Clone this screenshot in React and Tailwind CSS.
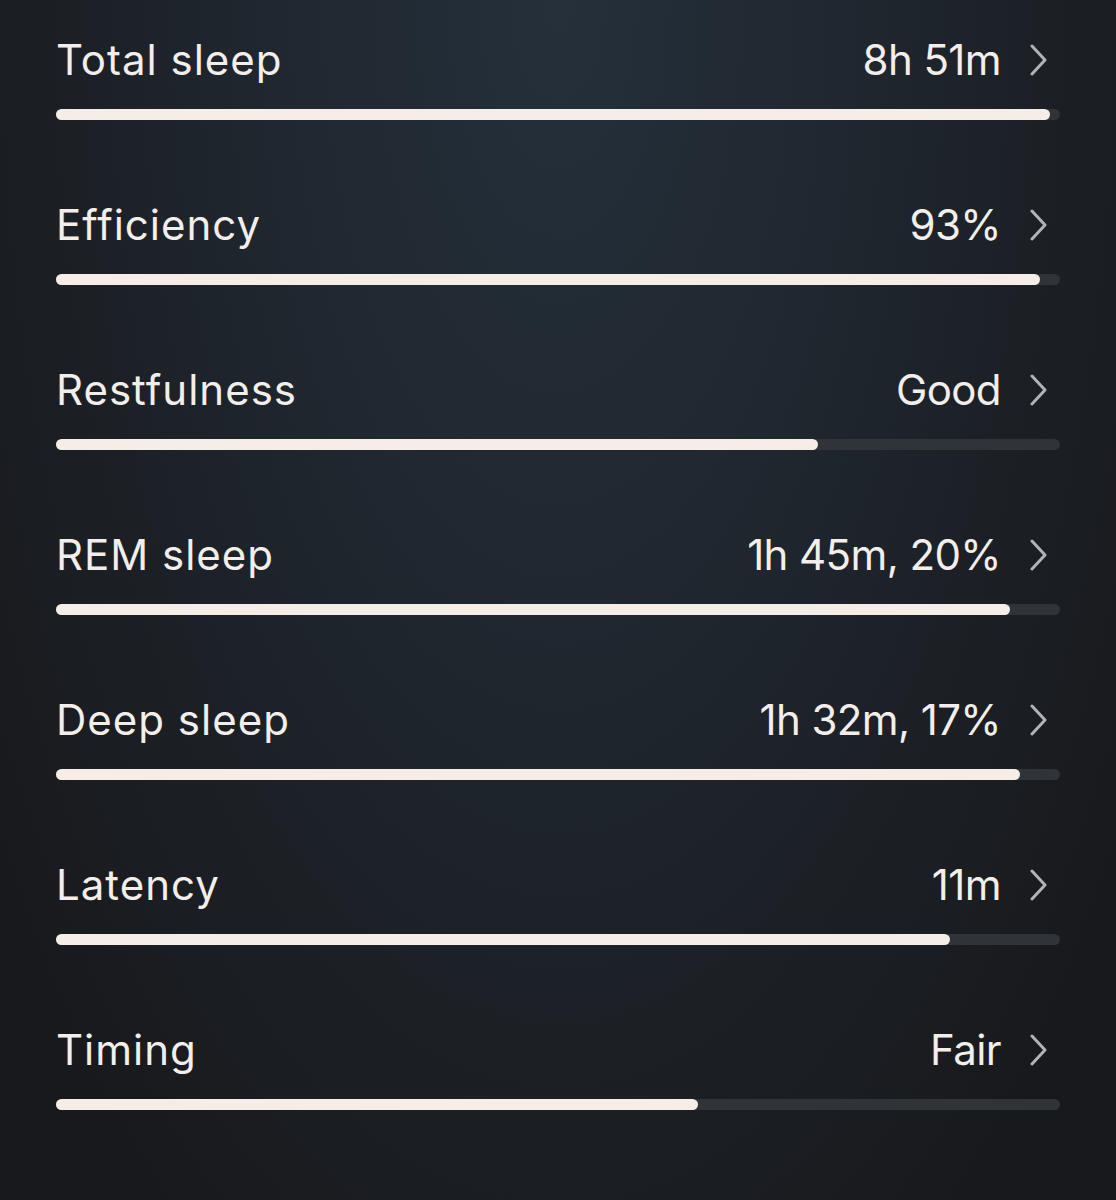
const rows = [
  { label: 'Total sleep', value: '8h 51m', fill: 994 },
  { label: 'Efficiency', value: '93%', fill: 984 },
  { label: 'Restfulness', value: 'Good', fill: 762 },
  { label: 'REM sleep', value: '1h 45m, 20%', fill: 954 },
  { label: 'Deep sleep', value: '1h 32m, 17%', fill: 964 },
  { label: 'Latency', value: '11m', fill: 894 },
  { label: 'Timing', value: 'Fair', fill: 642 },
];

function Chevron() {
  return (
    <svg width="20" height="32" viewBox="0 0 20 32" fill="none" className="shrink-0">
      <polyline points="4,2 17,16 4,30" stroke="#b3b3b5" strokeWidth="3" strokeLinecap="round" strokeLinejoin="round" />
    </svg>
  );
}

export default function App() {
  return (
    <div
      className="w-[1116px] h-[1200px] overflow-hidden bg-[radial-gradient(ellipse_at_50%_0%,#25303a_0%,#1f262e_40%,#18191c_88%)] text-[#f3eee9]"
      style={{ fontFamily: 'Inter, "Noto Sans", sans-serif' }}
    >
      <div className="flex flex-col gap-[79px] pt-[34px] px-[56px]">
        {rows.map((r) => (
          <div key={r.label} className="flex flex-col">
            <div className="flex items-center justify-between h-[52px]">
              <span className="text-[42px] leading-[52px] tracking-[1px]">{r.label}</span>
              <div className="flex items-center gap-[27px] pr-[12px]">
                <span className="text-[42px] leading-[52px] tracking-[-0.6px]">{r.value}</span>
                <Chevron />
              </div>
            </div>
            <div className="mt-[23px] h-[11px] w-full rounded-full bg-[#303338]">
              <div className="h-full rounded-full bg-[#f5ede6]" style={{ width: r.fill }} />
            </div>
          </div>
        ))}
      </div>
    </div>
  );
}
